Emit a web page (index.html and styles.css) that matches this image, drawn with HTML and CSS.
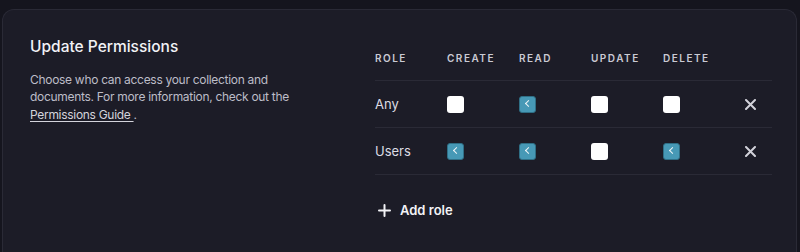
FILE: index.html
```html
<!DOCTYPE html>
<html>
<head>
    <title>Update Permissions</title>
    <link rel="stylesheet" href="styles.css">
</head>
<body>
    <div class="card">
        <div class="intro">
            <h2>Update Permissions</h2>
            <p>Choose who can access your collection and documents. For more information, check out the <a href="#">Permissions Guide </a>.</p>
        </div>

        <div class="perms">
            <div class="row head">
                <span>Role</span>
                <span>Create</span>
                <span>Read</span>
                <span>Update</span>
                <span>Delete</span>
                <span></span>
            </div>
            <div class="row">
                <span class="role">Any</span>
                <span class="box"></span>
                <span class="box on"></span>
                <span class="box"></span>
                <span class="box"></span>
                <button class="remove" title="Remove">
                    <svg width="11" height="11" viewBox="0 0 11 11"><path d="M1 1L10 10M10 1L1 10" stroke="currentColor" stroke-width="2" stroke-linecap="round"/></svg>
                </button>
            </div>
            <div class="row">
                <span class="role">Users</span>
                <span class="box on"></span>
                <span class="box on"></span>
                <span class="box"></span>
                <span class="box on"></span>
                <button class="remove" title="Remove">
                    <svg width="11" height="11" viewBox="0 0 11 11"><path d="M1 1L10 10M10 1L1 10" stroke="currentColor" stroke-width="2" stroke-linecap="round"/></svg>
                </button>
            </div>

            <button class="add">
                <svg width="13" height="13" viewBox="0 0 13 13"><path d="M6.5 1V12M1 6.5H12" stroke="currentColor" stroke-width="2" stroke-linecap="round"/></svg>
                Add role
            </button>
        </div>
    </div>
</body>
</html>
```

FILE: styles.css
```css
body {
    margin: 0;
    background: #15151e;
    font-family: Inter, "Liberation Sans", sans-serif;
    color: #e8e8ee;
}
.card {
    margin: 9px 3px 0 2px;
    height: 243px;
    box-sizing: border-box;
    background: #1c1c27;
    border: 1px solid #2a2a36;
    border-bottom: none;
    border-radius: 12px 12px 0 0;
    padding: 26px 24px 0 27px;
    display: flex;
}
.intro {
    width: 345px;
    flex: none;
}
.intro h2 {
    margin: 0;
    font-size: 15.5px;
    font-weight: 500;
    line-height: 22px;
    color: #f2f2f6;
}
.intro p {
    margin: 13px 0 0;
    width: 300px;
    font-size: 12px;
    letter-spacing: -0.3px;
    line-height: 17.3px;
    color: #bdbdc8;
}
.intro a {
    color: #d4d4dc;
    text-decoration: underline;
    text-underline-offset: 2px;
}
.perms {
    flex: 1;
}
.row {
    display: grid;
    grid-template-columns: 72px 72px 72px 72px 72px 1fr;
    align-items: center;
    height: 46px;
    border-bottom: 1px solid #2a2a36;
    font-size: 13px;
    color: #dcdce4;
}
.row.head {
    height: 44px;
    font-size: 10px;
    font-weight: 600;
    letter-spacing: 1.5px;
    text-transform: uppercase;
    color: #cacad4;
}
.box {
    width: 17px;
    height: 17px;
    border-radius: 3px;
    background: #ffffff;
    box-sizing: border-box;
}
.box.on {
    background: #4799b6;
    border: 1px solid #2f6f86;
    position: relative;
}
.box.on::after {
    content: "";
    position: absolute;
    left: 6px;
    top: 4.5px;
    width: 4px;
    height: 4px;
    border-left: 1.5px solid #f0f6f8;
    border-bottom: 1.5px solid #f0f6f8;
    transform: rotate(45deg);
}
.remove {
    justify-self: start;
    margin-left: 10px;
    padding: 0;
    background: none;
    border: none;
    color: #d2d2da;
    display: flex;
    cursor: pointer;
}
.add {
    margin-top: 25px;
    height: 20px;
    padding: 0 0 0 3px;
    display: flex;
    align-items: center;
    gap: 9px;
    background: none;
    border: none;
    color: #f2f2f6;
    font-family: inherit;
    font-size: 13px;
    font-weight: 600;
    cursor: pointer;
}
```
